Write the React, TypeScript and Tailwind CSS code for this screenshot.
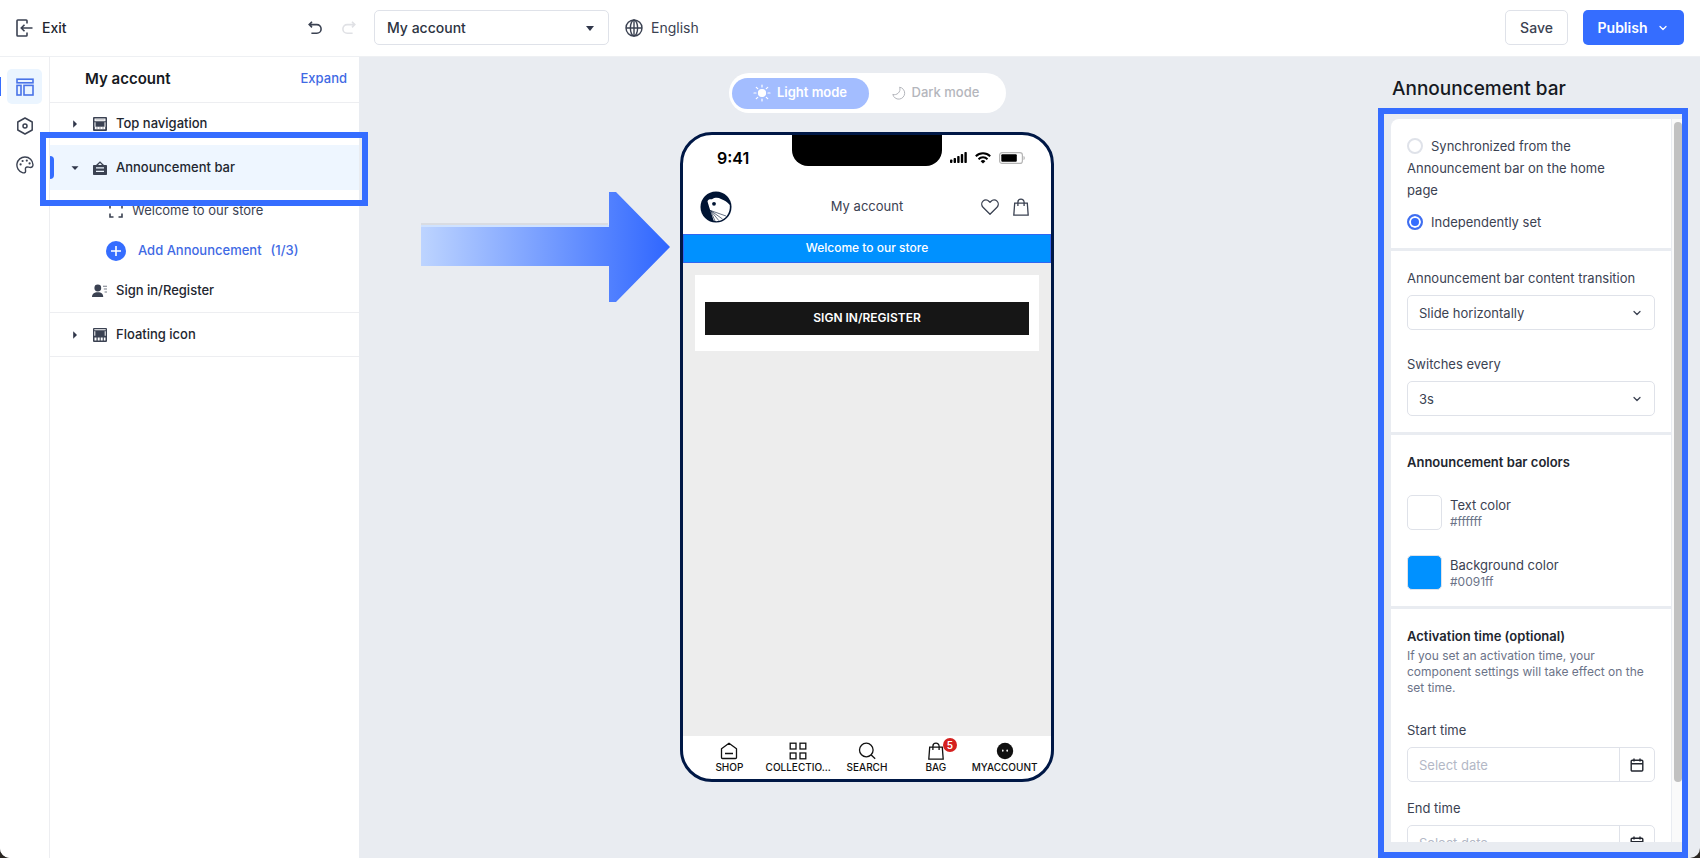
import React, { useState } from 'react';
import { ChevronDown } from 'lucide-react';

type IconProps = { className?: string };

const ExitIcon: React.FC<IconProps> = ({ className }) => (
  <svg className={className} viewBox="0 0 17 18" fill="none" stroke="currentColor" strokeWidth={1.6}>
    <path d="M11 4.5V1.8a.8.8 0 0 0-.8-.8H1.8a.8.8 0 0 0-.8.8v14.4a.8.8 0 0 0 .8.8h8.4a.8.8 0 0 0 .8-.8v-2.7" />
    <path d="M16.5 9H5.5M8.5 5.8 5.3 9l3.2 3.2" />
  </svg>
);

const UndoIcon: React.FC<IconProps> = ({ className }) => (
  <svg className={className} viewBox="0 0 14 14" fill="none" stroke="currentColor" strokeWidth={1.6}>
    <path d="M4 .8 1.2 3.6 4 6.4M1.4 3.6h7.4a4.3 4.3 0 0 1 0 8.6H3.4" />
  </svg>
);

const GlobeIcon: React.FC<IconProps> = ({ className }) => (
  <svg className={className} viewBox="0 0 18 18" fill="none" stroke="currentColor" strokeWidth={1.4}>
    <circle cx="9" cy="9" r="8" />
    <ellipse cx="9" cy="9" rx="3.6" ry="8" />
    <path d="M1 9h16M9 1v16" />
  </svg>
);

const LayoutIcon: React.FC<IconProps> = ({ className }) => (
  <svg className={className} viewBox="0 0 18 18" fill="none" stroke="currentColor" strokeWidth={1.6}>
    <rect x="1" y="1.2" width="16" height="3.6" />
    <rect x="1" y="7.4" width="4" height="9.6" />
    <rect x="8" y="7.4" width="9" height="9.6" />
  </svg>
);

const HexIcon: React.FC<IconProps> = ({ className }) => (
  <svg className={className} viewBox="0 0 18 18" fill="none" stroke="currentColor" strokeWidth={1.5} strokeLinejoin="round">
    <path d="M9 1l7.200 4v8L9 17l-7.200-4V5z" />
    <circle cx="9" cy="9" r="2" />
  </svg>
);

const PaletteIcon: React.FC<IconProps> = ({ className }) => (
  <svg className={className} viewBox="0 0 18 18" fill="none" stroke="currentColor" strokeWidth={1.4}>
    <path d="M9 1a8 8 0 0 0-2.6 15.6c1.4.5 3.200.3 3.200-1.400 0-1.600-.6-2.400.2-3.600.9-1.300 2.600-.4 4.200-.2 1.700.2 3-.7 3-2.600A8 8 0 0 0 9 1z" />
    <g fill="currentColor" stroke="none">
      <circle cx="4.600" cy="8.400" r="1.100" />
      <circle cx="6.600" cy="5" r="1.100" />
      <circle cx="10.800" cy="4.600" r="1.100" />
      <circle cx="13.600" cy="7.400" r="1.100" />
    </g>
  </svg>
);

const NavBlockIcon: React.FC<IconProps> = ({ className }) => (
  <svg className={className} viewBox="0 0 14 14" fill="currentColor">
    <path fillRule="evenodd" d="M1 0h12a1 1 0 0 1 1 1v12a1 1 0 0 1-1 1H1a1 1 0 0 1-1-1V1a1 1 0 0 1 1-1zM1.500 1.500v2.800h11V1.500zM1.500 5.300v4.400h1V5.300zM11.500 5.300v4.400h1V5.300zM1.800 9.700v2.600h10.400V9.700z" />
    <path d="M3 10.600h2v1H3zM6 10.600h2v1H6zM9 10.600h2v1H9zM2.500 2.500h9v.8h-9z" opacity=".5" />
  </svg>
);

const AnnounceIcon: React.FC<IconProps> = ({ className }) => (
  <svg className={className} viewBox="0 0 14 14" fill="currentColor">
    <path fillRule="evenodd" d="M7 .2 11 4h2.200a.8.8 0 0 1 .8.8v8.400a.8.8 0 0 1-.8.8H.8a.8.8 0 0 1-.8-.8V4.800A.8.8 0 0 1 .8 4H3zM7 2 5 4h4zM3 6.300v1.200h8V6.300zM3 9.800V11h8V9.800z" />
  </svg>
);

const FloatIcon: React.FC<IconProps> = ({ className }) => (
  <svg className={className} viewBox="0 0 14 14" fill="currentColor">
    <path fillRule="evenodd" d="M1 0h12a1 1 0 0 1 1 1v12a1 1 0 0 1-1 1H1a1 1 0 0 1-1-1V1a1 1 0 0 1 1-1zM1.300 1.300v1h11.400v-1zM1.300 3.300v4.400h1V3.300zM11.700 3.300v4.400h1V3.300zM1.500 9.400v3.200h2V9.400zM4.700 9.400v3.200h2V9.400zM7.700 9.400v3.200h2V9.400zM10.800 9.400v3.200h1.700V9.400z" />
  </svg>
);

const UserListIcon: React.FC<IconProps> = ({ className }) => (
  <svg className={className} viewBox="0 0 16 14" fill="currentColor">
    <circle cx="5.800" cy="4" r="3.400" />
    <path d="M0 13c0-3 2-4.800 5.800-4.800S11.200 10 11.200 13z" />
    <path d="M11 1.800h4v1h-4zM11.800 4.600H15v1h-3.200zM12.600 7.400H15v1h-2.400z" opacity=".7" />
  </svg>
);

const CornersIcon: React.FC<IconProps> = ({ className }) => (
  <svg className={className} viewBox="0 0 14 14" fill="none" stroke="currentColor" strokeWidth={1.600}>
    <path d="M1 4.500V1h3.500M9.500 1H13v3.500M13 9.500V13H9.500M4.500 13H1V9.500" />
  </svg>
);

const PlusCircleIcon: React.FC<IconProps> = ({ className }) => (
  <svg className={className} viewBox="0 0 20 20" fill="none">
    <circle cx="10" cy="10" r="10" fill="#356dff" />
    <path d="M10 5v10M5 10h10" stroke="#fff" strokeWidth={1.600} />
  </svg>
);

const Caret: React.FC<{ open?: boolean }> = ({ open }) => (
  <svg className="size-2 shrink-0 text-[#30374a]" viewBox="0 0 8 8" fill="currentColor">
    {open ? <path d="M.5 2.200h7L4 6z" /> : <path d="M2.200.3v7.400L6 4z" />}
  </svg>
);

const SunIcon: React.FC<IconProps> = ({ className }) => (
  <svg className={className} viewBox="0 0 18 18" fill="currentColor" stroke="currentColor" strokeWidth={1.200} strokeLinecap="round">
    <circle cx="9" cy="9" r="3.500" />
    <path d="M9 1v2M9 15v2M1 9h2M15 9h2M3.300 3.300l1.400 1.400M13.300 13.300l1.400 1.400M3.300 14.700l1.400-1.400M13.300 4.700l1.400-1.400" />
  </svg>
);

const MoonIcon: React.FC<IconProps> = ({ className }) => (
  <svg className={className} viewBox="0 0 14 14" fill="none" stroke="currentColor" strokeWidth={1} strokeLinejoin="round">
    <path d="M7.600 1.200a6 6 0 1 1-6.800 7.200c3.600 1.400 8.600-2.400 6.800-7.200z" />
  </svg>
);

const SignalIcon: React.FC<IconProps> = ({ className }) => (
  <svg className={className} viewBox="0 0 17 11" fill="currentColor">
    <rect x="0" y="7.500" width="2.400" height="3.500" rx=".8" />
    <rect x="3.600" y="6" width="2.400" height="5" rx=".8" />
    <rect x="7.200" y="4" width="2.400" height="7" rx=".8" />
    <rect x="10.800" y="2" width="2.400" height="9" rx=".8" />
    <rect x="14.400" y="0" width="2.400" height="11" rx=".8" />
  </svg>
);

const WifiIcon: React.FC<IconProps> = ({ className }) => (
  <svg className={className} viewBox="0 0 16 12" fill="none" stroke="currentColor" strokeWidth={2}>
    <path d="M.8 4.300a10.300 10.300 0 0 1 14.400 0M3.500 7.200a6.400 6.400 0 0 1 9 0" />
    <path d="M8 11.600 5.600 9.200a3.400 3.400 0 0 1 4.800 0z" fill="currentColor" stroke="none" />
  </svg>
);

const BatteryIcon: React.FC<IconProps> = ({ className }) => (
  <svg className={className} viewBox="0 0 26 12" fill="none">
    <rect x=".6" y=".6" width="22.800" height="10.800" rx="2.500" stroke="#b5b5b5" strokeWidth={1.200} />
    <rect x="2.300" y="2.300" width="15.500" height="7.400" rx="1" fill="#000" />
    <path d="M24.500 4v4c1-.4 1.300-1.200 1.300-2s-.3-1.600-1.300-2z" fill="#b5b5b5" />
  </svg>
);

const HeartIcon: React.FC<IconProps> = ({ className }) => (
  <svg className={className} viewBox="0 0 18 16" fill="none" stroke="currentColor" strokeWidth={1.300} strokeLinejoin="round">
    <path d="M9 15.200 2 8.200C.3 6.400.4 3.700 2 2.100c1.700-1.700 4.300-1.600 5.900.1L9 3.300l1.100-1.100c1.600-1.700 4.200-1.800 5.900-.1 1.600 1.600 1.700 4.300 0 6.100z" />
  </svg>
);

const BagIcon: React.FC<IconProps> = ({ className }) => (
  <svg className={className} viewBox="0 0 16 18" fill="none" stroke="currentColor" strokeWidth={1.300}>
    <path d="M1.700 5.200h12.600l.9 12H.8zM4.900 8V4.200a3.100 3.100 0 0 1 6.200 0V8" />
  </svg>
);

const HouseIcon: React.FC<IconProps> = ({ className }) => (
  <svg className={className} viewBox="0 0 18 18" fill="none" stroke="currentColor" strokeWidth={1.300} strokeLinejoin="round">
    <path d="M1.500 6.800 9 1.200l7.500 5.600v8.700a1 1 0 0 1-1 1h-13a1 1 0 0 1-1-1zM5 11.500h8" />
  </svg>
);

const GridIcon: React.FC<IconProps> = ({ className }) => (
  <svg className={className} viewBox="0 0 18 18" fill="none" stroke="currentColor" strokeWidth={1.300}>
    <rect x="1.200" y="1.200" width="5.800" height="5.800" />
    <rect x="11" y="1.200" width="5.800" height="5.800" />
    <rect x="1.200" y="11" width="5.800" height="5.800" />
    <rect x="11" y="11" width="5.800" height="5.800" />
  </svg>
);

const SearchIcon: React.FC<IconProps> = ({ className }) => (
  <svg className={className} viewBox="0 0 18 18" fill="none" stroke="currentColor" strokeWidth={1.300}>
    <circle cx="8.300" cy="8" r="6.800" />
    <path d="m13 12.800 4.200 4" />
  </svg>
);

const FaceIcon: React.FC<IconProps> = ({ className }) => (
  <svg className={className} viewBox="0 0 18 18">
    <circle cx="9" cy="9" r="8.200" fill="#111" />
    <ellipse cx="6.800" cy="8.600" rx=".8" ry="1.200" fill="#fff" />
    <ellipse cx="11.200" cy="8.600" rx=".8" ry="1.200" fill="#fff" />
  </svg>
);

const StoreLogo: React.FC<IconProps> = ({ className }) => (
  <svg className={className} viewBox="0 0 32 32">
    <circle cx="16" cy="16" r="15.500" fill="#001433" />
    <path d="M7.500 10.500c.3-2 2-2.500 4.500-2.300 3-2 6.500-1.800 9-.2 3 1.400 6.600 2.800 8.800 6 .8 8-4.300 14.600-11 16-2 .3-3.800.2-5.200-.4C12 24 9.500 18 7.500 10.500z" fill="#fff" />
    <circle cx="14" cy="12.800" r="1.900" fill="#001433" />
    <path d="M10.500 19.500 15 30M10.500 19.500 19 29.800M10.500 19.500l12 8.500M10.500 19.500l15.500 5.500" fill="none" stroke="#001433" strokeWidth={0.600} />
  </svg>
);

const CalendarIcon: React.FC<IconProps> = ({ className }) => (
  <svg className={className} viewBox="0 0 14 14" fill="none" stroke="currentColor" strokeWidth={1.400}>
    <rect x="1.200" y="2.200" width="11.600" height="10.800" rx="1" />
    <path d="M1.200 5.800h11.600M4 .4v3.200M10 .4v3.200" />
  </svg>
);

const sideTabs = [
  { name: 'Layout', Icon: LayoutIcon },
  { name: 'Settings', Icon: HexIcon },
  { name: 'Theme', Icon: PaletteIcon },
];

const phoneTabs = [
  { name: 'SHOP', Icon: HouseIcon },
  { name: 'COLLECTIO...', Icon: GridIcon },
  { name: 'SEARCH', Icon: SearchIcon },
  { name: 'BAG', Icon: BagIcon, badge: 5 },
  { name: 'MYACCOUNT', Icon: FaceIcon },
];

const Header: React.FC = () => (
  <header className="flex h-[57px] shrink-0 items-center border-b border-[#eef0f3] bg-white px-4 pb-px text-sm text-[#3b4252]">
    <div className="flex w-[358px] items-center justify-between">
      <button className="flex items-center gap-[9px] font-medium text-[#22262f]">
        <ExitIcon className="h-[18px] w-[17px] text-[#3b4252]" />
        Exit
      </button>
      <div className="flex items-center gap-5 pr-[18px]">
        <button aria-label="Undo">
          <UndoIcon className="size-[14px]" />
        </button>
        <button aria-label="Redo" disabled>
          <UndoIcon className="size-[14px] -scale-x-100 text-[#e0e1e5]" />
        </button>
      </div>
    </div>
    <div className="relative w-[235px]">
      <select
        aria-label="Page"
        className="h-[35px] w-full appearance-none rounded-[5px] border border-[#dfe2e9] bg-white px-3 font-medium text-[#2d3342]"
      >
        <option>My account</option>
      </select>
      <svg className="pointer-events-none absolute top-4 right-[15px] h-[5px] w-2 text-[#30374a]" viewBox="0 0 8 5" fill="currentColor">
        <path d="M0 0h8L4 5z" />
      </svg>
    </div>
    <button className="ml-4 flex items-center gap-2">
      <GlobeIcon className="size-[18px]" />
      English
    </button>
    <div className="ml-auto flex gap-[15px]">
      <button className="h-[35px] w-[63px] rounded-[5px] border border-[#dfe2e9] font-medium">Save</button>
      <button className="flex h-[35px] w-[101px] items-center justify-center gap-[10px] rounded-[5px] bg-[#356dff] font-semibold text-white">
        Publish
        <ChevronDown className="size-3" strokeWidth={2.500} />
      </button>
    </div>
  </header>
);

const SideRail: React.FC = () => (
  <nav className="flex w-[50px] shrink-0 flex-col items-center gap-1 border-r border-[#edeef1] bg-white pt-3">
    {sideTabs.map(({ name, Icon }, index) => (
      <div key={name} className="relative flex w-full justify-center">
        {index === 0 && <span className="absolute top-2 left-0 h-[19px] w-px bg-[#356dff]" />}
        <button
          aria-label={name}
          className={
            index === 0
              ? 'flex size-[35px] items-center justify-center rounded-[5px] bg-[#ebf5ff] text-[#4a74e8]'
              : 'flex size-[35px] items-center justify-center text-[#3b4252]'
          }
        >
          <Icon className="size-[18px]" />
        </button>
      </div>
    ))}
  </nav>
);

const SectionTree: React.FC = () => (
  <aside className="w-[309px] shrink-0 bg-white font-medium text-[#22262f]">
    <div className="flex h-[46px] items-center justify-between border-b border-[#edeef1] pr-3 pb-px pl-[35px]">
      <h2 className="text-[15px] font-semibold text-[#161922]">My account</h2>
      <button className="text-[#3f6ae4]">Expand</button>
    </div>
    <div className="border-b border-[#edeef1]">
      <button className="flex h-[42px] w-full items-center pl-[21px]">
        <Caret />
        <NavBlockIcon className="mr-[9px] ml-[14px] size-[14px] text-[#3b4252]" />
        Top navigation
      </button>
      <div className="relative">
        <button className="flex h-[45px] w-full items-center bg-[#eef6ff] pl-[21px]">
          <Caret open />
          <AnnounceIcon className="mr-[9px] ml-[14px] size-[14px] text-[#3b4252]" />
          Announcement bar
        </button>
        <span className="absolute top-[11px] left-0 h-[23px] w-1 rounded-r-[4px] bg-[#356dff]" />
        <div className="pointer-events-none absolute -top-[13px] -right-[9px] -bottom-[16px] -left-[10px] z-10 border-[6px] border-[#356dff]" />
      </div>
      <button className="flex h-[42px] w-full items-center gap-[9px] pl-[59px] font-normal text-[#3b4252]">
        <CornersIcon className="size-[14px]" />
        Welcome to our store
      </button>
      <button className="flex h-[38px] w-full items-center pl-14 text-[#3f6ae4]">
        <PlusCircleIcon className="size-5" />
        <span className="ml-3">Add Announcement</span>
        <span className="ml-[9px]">(1/3)</span>
      </button>
      <button className="flex h-[42px] w-full items-center gap-2 pl-[42px]">
        <UserListIcon className="h-[14px] w-4 text-[#3b4252]" />
        Sign in/Register
      </button>
    </div>
    <button className="flex h-[44px] w-full items-center border-b border-[#edeef1] pl-[21px]">
      <Caret />
      <FloatIcon className="mr-[9px] ml-[14px] size-[14px] text-[#3b4252]" />
      Floating icon
    </button>
  </aside>
);

const ModeToggle: React.FC = () => (
  <div className="flex h-10 w-[277px] items-center rounded-full bg-white px-[3px]">
    <button className="flex h-[31px] w-[137px] items-center justify-center gap-[6px] rounded-full bg-[#a3bdff] font-semibold text-white">
      <SunIcon className="size-[18px]" />
      Light mode
    </button>
    <button className="flex flex-1 items-center justify-center gap-[6px] font-medium text-[#b4b6bc]">
      <MoonIcon className="size-[14px]" />
      Dark mode
    </button>
  </div>
);

const PhonePreview: React.FC = () => (
  <div className="flex h-[650px] w-[374px] flex-col overflow-hidden rounded-[32px] border-[3px] border-[#001846] bg-white">
    <div className="flex h-[45px] shrink-0 items-center pr-[26px]">
      <span className="w-[109px] pl-[34px] text-base font-semibold text-black">9:41</span>
      <div className="h-[31px] w-[150px] self-start rounded-b-2xl bg-black" />
      <div className="ml-auto flex items-center gap-2 text-black">
        <SignalIcon className="h-[11px] w-[17px]" />
        <WifiIcon className="h-3 w-4" />
        <BatteryIcon className="h-3 w-[26px]" />
      </div>
    </div>
    <div className="grid h-[54px] shrink-0 grid-cols-3 items-center px-[17px] text-[#3b4252]">
      <StoreLogo className="size-8" />
      <span className="text-center">My account</span>
      <div className="flex items-center justify-end gap-[14px] pr-[5px]">
        <HeartIcon className="h-4 w-[18px]" />
        <BagIcon className="h-[18px] w-4" />
      </div>
    </div>
    <div className="flex h-[29px] shrink-0 items-center justify-center border border-[#3166f0] bg-[#0091ff] pb-[2px] text-xs font-medium text-white">
      Welcome to our store
    </div>
    <div className="flex-1 bg-[#ededed] px-3 pt-3">
      <div className="bg-white px-[10px] pt-[27px] pb-4">
        <button className="h-[33px] w-full bg-[#161616] pb-[2px] text-xs font-semibold text-white">SIGN IN/REGISTER</button>
      </div>
    </div>
    <nav className="grid h-[43px] shrink-0 grid-cols-5 px-3">
      {phoneTabs.map(({ name, Icon, badge }) => (
        <button key={name} className="flex flex-col items-center pt-[6px] text-[10px] leading-[14px] font-medium text-[#111]">
          <span className="relative">
            <Icon className="size-[18px]" />
            {badge && (
              <span className="absolute -top-1 -right-3 flex size-[14px] items-center justify-center rounded-full bg-[#d5201f] text-[10px] font-semibold text-white">
                {badge}
              </span>
            )}
          </span>
          {name}
        </button>
      ))}
    </nav>
  </div>
);

const SelectField: React.FC<{ id: string; label: string; options: string[] }> = ({ id, label, options }) => (
  <div>
    <label htmlFor={id} className="block">
      {label}
    </label>
    <div className="relative mt-[6px]">
      <select id={id} className="h-[35px] w-full appearance-none rounded-[5px] border border-[#dfe2e9] bg-white px-[11px]">
        {options.map((option) => (
          <option key={option}>{option}</option>
        ))}
      </select>
      <ChevronDown className="pointer-events-none absolute top-3 right-3 size-3" strokeWidth={2.500} />
    </div>
  </div>
);

const DateField: React.FC<{ id: string; label: string }> = ({ id, label }) => (
  <div>
    <label htmlFor={id} className="block">
      {label}
    </label>
    <div className="mt-[6px] flex h-[35px] rounded-[5px] border border-[#dfe2e9]">
      <input id={id} type="text" placeholder="Select date" className="min-w-0 flex-1 px-[11px] placeholder:text-[#b3b8c6]" />
      <button aria-label={`Pick ${label}`} className="flex w-[35px] items-center justify-center border-l border-[#dfe2e9] text-[#22262f]">
        <CalendarIcon className="size-[14px]" />
      </button>
    </div>
  </div>
);

const Swatch: React.FC<{ label: string; value: string }> = ({ label, value }) => (
  <div className="flex items-center gap-2">
    <button
      aria-label={label}
      className={
        value === '#ffffff'
          ? 'size-[35px] rounded-[5px] border border-[#dfe2e9]'
          : 'size-[35px] rounded-[5px] border border-[#dfe2e9] bg-[#0091ff]'
      }
    />
    <div>
      <p className="leading-[18px]">{label}</p>
      <p className="text-xs text-[#6b7388]">{value}</p>
    </div>
  </div>
);

const SettingsPanel: React.FC = () => {
  const [source, setSource] = useState<'sync' | 'own'>('own');
  const radioClass =
    'mr-2 inline-block size-4 appearance-none rounded-full border-2 border-[#dfe2e9] bg-white align-[-3px] checked:border-[#3f6ef0] checked:bg-[#356dff] checked:shadow-[inset_0_0_0_2px_#fff]';

  return (
    <section className="flex w-[325px] shrink-0 flex-col pr-3 pl-[3px]">
      <h1 className="pt-[17px] pb-1 pl-[14px] text-[19px] leading-[30px] font-medium text-[#161922]">Announcement bar</h1>
      <div className="flex min-h-0 flex-1 border-[6px] border-[#356dff] pt-[5px] pb-[10px] pl-[7px]">
        <div className="min-w-0 flex-1 overflow-y-auto rounded-tl-[8px] bg-white leading-[22px] text-[#3b4252] [scrollbar-width:none]">
          <div className="border-b-[3px] border-[#e9ecf1] px-4 pt-4 pb-[15px]">
            <label className="block pr-8">
              <input type="radio" name="source" className={radioClass} checked={source === 'sync'} onChange={() => setSource('sync')} />
              Synchronized from the Announcement bar on the home page
            </label>
            <label className="mt-[10px] block">
              <input type="radio" name="source" className={radioClass} checked={source === 'own'} onChange={() => setSource('own')} />
              Independently set
            </label>
          </div>
          <div className="space-y-[23px] border-b-[3px] border-[#e9ecf1] px-4 py-4">
            <SelectField id="transition" label="Announcement bar content transition" options={['Slide horizontally', 'Slide vertically']} />
            <SelectField id="interval" label="Switches every" options={['3s', '5s', '10s']} />
          </div>
          <div className="border-b-[3px] border-[#e9ecf1] px-4 py-4">
            <h2 className="font-semibold text-[#22262f]">Announcement bar colors</h2>
            <div className="mt-[22px] space-y-[25px]">
              <Swatch label="Text color" value="#ffffff" />
              <Swatch label="Background color" value="#0091ff" />
            </div>
          </div>
          <div className="px-4 py-4">
            <h2 className="font-semibold text-[#22262f]">Activation time (optional)</h2>
            <p className="mt-px text-xs text-[#6b7388]">
              If you set an activation time, your component settings will take effect on the set time.
            </p>
            <div className="mt-[23px] space-y-[15px]">
              <DateField id="start" label="Start time" />
              <DateField id="end" label="End time" />
            </div>
          </div>
        </div>
        <div className="w-[11px] border-l border-[#e9ecf1] bg-[#fafafa] pt-[3px] pl-[2px]">
          <div className="h-[660px] max-h-[92%] rounded-full bg-[#c1c1c1]" />
        </div>
      </div>
    </section>
  );
};

const App: React.FC = () => (
  <div className="h-screen bg-[#2a2622] font-['Inter',sans-serif] text-[13px]">
    <div className="flex h-full flex-col overflow-hidden rounded-b-[10px] bg-[#e9ecf1]">
      <Header />
      <div className="flex min-h-0 flex-1">
        <SideRail />
        <SectionTree />
        <main className="relative flex flex-1 flex-col items-center gap-[19px] pt-4">
          <ModeToggle />
          <PhonePreview />
          {/* Arrow pointing at the announcement bar */}
          <svg className="absolute top-[135px] right-1/2 mr-[197px] h-[110px] w-[250px]" viewBox="0 0 250 110">
            <defs>
              <linearGradient id="arrow" x1="0" x2="1" y1="0" y2="0">
                <stop offset="0" stopColor="#bdd4ff" />
                <stop offset="1" stopColor="#2f66ff" />
              </linearGradient>
            </defs>
            <path d="M1 32h187" stroke="#d9dce2" strokeWidth={2} />
            <path d="M1 34h188" stroke="#cfe2ff" strokeWidth={2} />
            <path d="M1 35h188V0h7l54 55-54 55h-7V74H1z" fill="url(#arrow)" />
          </svg>
        </main>
        <SettingsPanel />
      </div>
    </div>
  </div>
);

export default App;
